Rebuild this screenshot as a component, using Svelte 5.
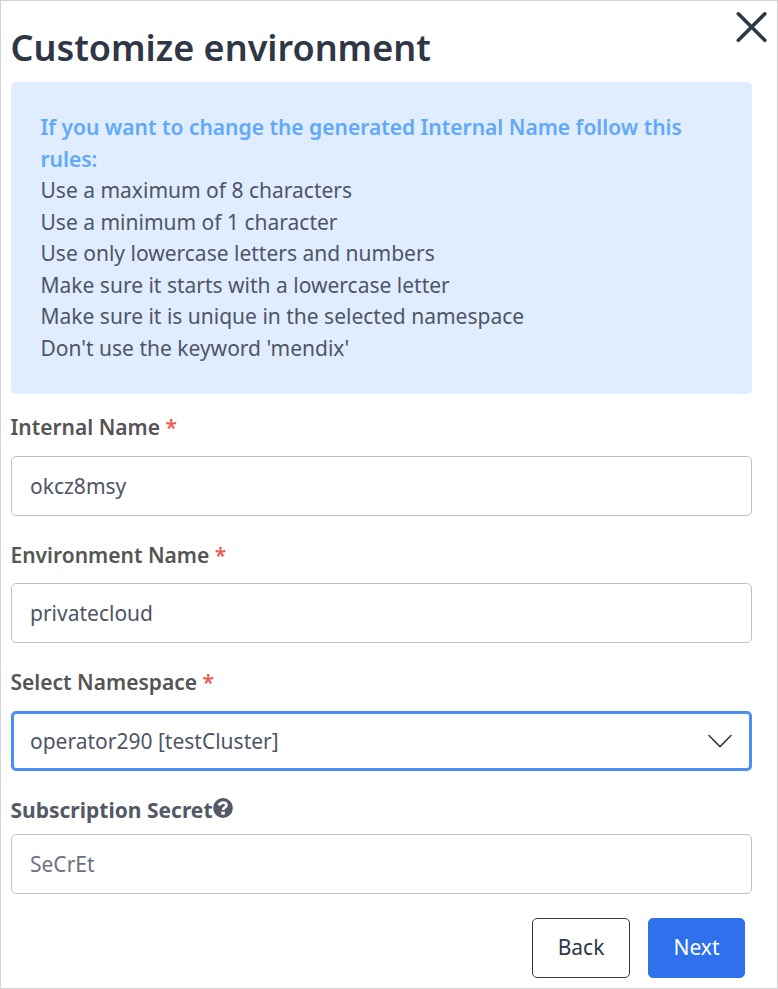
<script>
  const rules = [
    'Use a maximum of 8 characters',
    'Use a minimum of 1 character',
    'Use only lowercase letters and numbers',
    'Make sure it starts with a lowercase letter',
    'Make sure it is unique in the selected namespace',
    "Don't use the keyword 'mendix'"
  ];
</script>

<main class="dialog">
  <header>
    <h1>Customize environment</h1>
    <button class="close" aria-label="Close">
      <svg width="32" height="32" viewBox="0 0 32 32"><path d="M3.300 2.800 29.800 29.300M29.800 2.800 3.300 29.300" /></svg>
    </button>
  </header>

  <section class="info">
    <strong>If you want to change the generated Internal Name follow this rules:</strong>
    {#each rules as rule}
      <div>{rule}</div>
    {/each}
  </section>

  <div class="label first">Internal Name <span class="req">*</span></div>
  <div class="field">okcz8msy</div>

  <div class="label">Environment Name <span class="req">*</span></div>
  <div class="field">privatecloud</div>

  <div class="label namespace">Select Namespace <span class="req">*</span></div>
  <div class="field select">
    <span>operator290 [testCluster]</span>
    <svg width="26" height="16" viewBox="0 0 26 16"><path d="M2 2.500 13 13.500 24 2.500" /></svg>
  </div>

  <div class="label secret">Subscription Secret<svg width="20" height="20" viewBox="0 0 20 20"><circle cx="10" cy="10" r="9.900" /><path d="M5.900 7.500Q7.200 4.700 10.100 4.700Q13.400 4.700 13.400 7.300C13.400 9.600 10.100 9.300 10.100 12.100" /><rect x="8.300" y="13.600" width="3.500" height="3.100" /></svg></div>
  <div class="field placeholder">SeCrEt</div>

  <footer>
    <button class="btn back">Back</button>
    <button class="btn next">Next</button>
  </footer>
</main>

<style>
  :global(body) { background: #fff; }
  .dialog {
    box-sizing: border-box;
    width: 778px;
    height: 989px;
    padding: 0 25px 0 10px;
    border: 1px solid #d3d3d3;
    font-family: "Noto Sans", sans-serif;
    font-size: 21px;
    color: #4f5565;
    overflow: hidden;
  }
  header { display: flex; justify-content: space-between; height: 81px; }
  h1 { margin: 22px 0 0 -0.500px; font-size: 36px; line-height: 50px; font-weight: 600; color: #2f3646; white-space: nowrap; }
  button { font: inherit; padding: 0; }
  .close { flex: none; width: 32px; height: 32px; margin: 10px -15px 0 0; border: 0; background: none; }
  .close svg { display: block; }
  .close path { stroke: #2f3646; stroke-width: 3.600; stroke-linecap: round; fill: none; }
  .info { box-sizing: border-box; height: 312px; padding: 30px 30px 30px 29.500px; border-radius: 5px; background: #e0edfe; line-height: 31.500px; }
  .info strong { display: block; color: #60a9fc; font-weight: 605; }
  .label { height: 30px; margin: 24px 0 13px -0.500px; line-height: 30px; font-weight: 605; color: #555; }
  .label.first { margin-top: 18px; margin-bottom: 14px; }
  .label.namespace { margin-bottom: 14px; }
  .req { color: #ec5b56; }
  .field { display: flex; align-items: center; box-sizing: border-box; height: 60px; padding: 0 18px; border: 1px solid #c1c1c5; border-radius: 5px; }
  .select { justify-content: space-between; padding: 0 16px; border: 3px solid #4a8ff3; }
  .select path { fill: none; stroke: #2f3646; stroke-width: 1.600; stroke-linecap: round; }
  .label.secret { display: flex; margin-bottom: 9px; font-weight: 700; color: #535967; }
  .secret svg { margin-top: 3px; }
  .secret circle { fill: #535967; }
  .secret path { fill: none; stroke: #fff; stroke-width: 2.800; }
  .secret rect { fill: #fff; }
  .placeholder { color: #6c717d; }
  footer { display: flex; justify-content: flex-end; gap: 18px; padding-right: 7px; margin-top: 24px; }
  .btn { box-sizing: border-box; height: 60px; width: 98px; padding-bottom: 2px; border: 1px solid #343949; border-radius: 5px; background: #fff; color: #2f3646; }
  .next { width: 97px; border-color: #2f71ed; background: #2f71ed; color: #fff; }
</style>
